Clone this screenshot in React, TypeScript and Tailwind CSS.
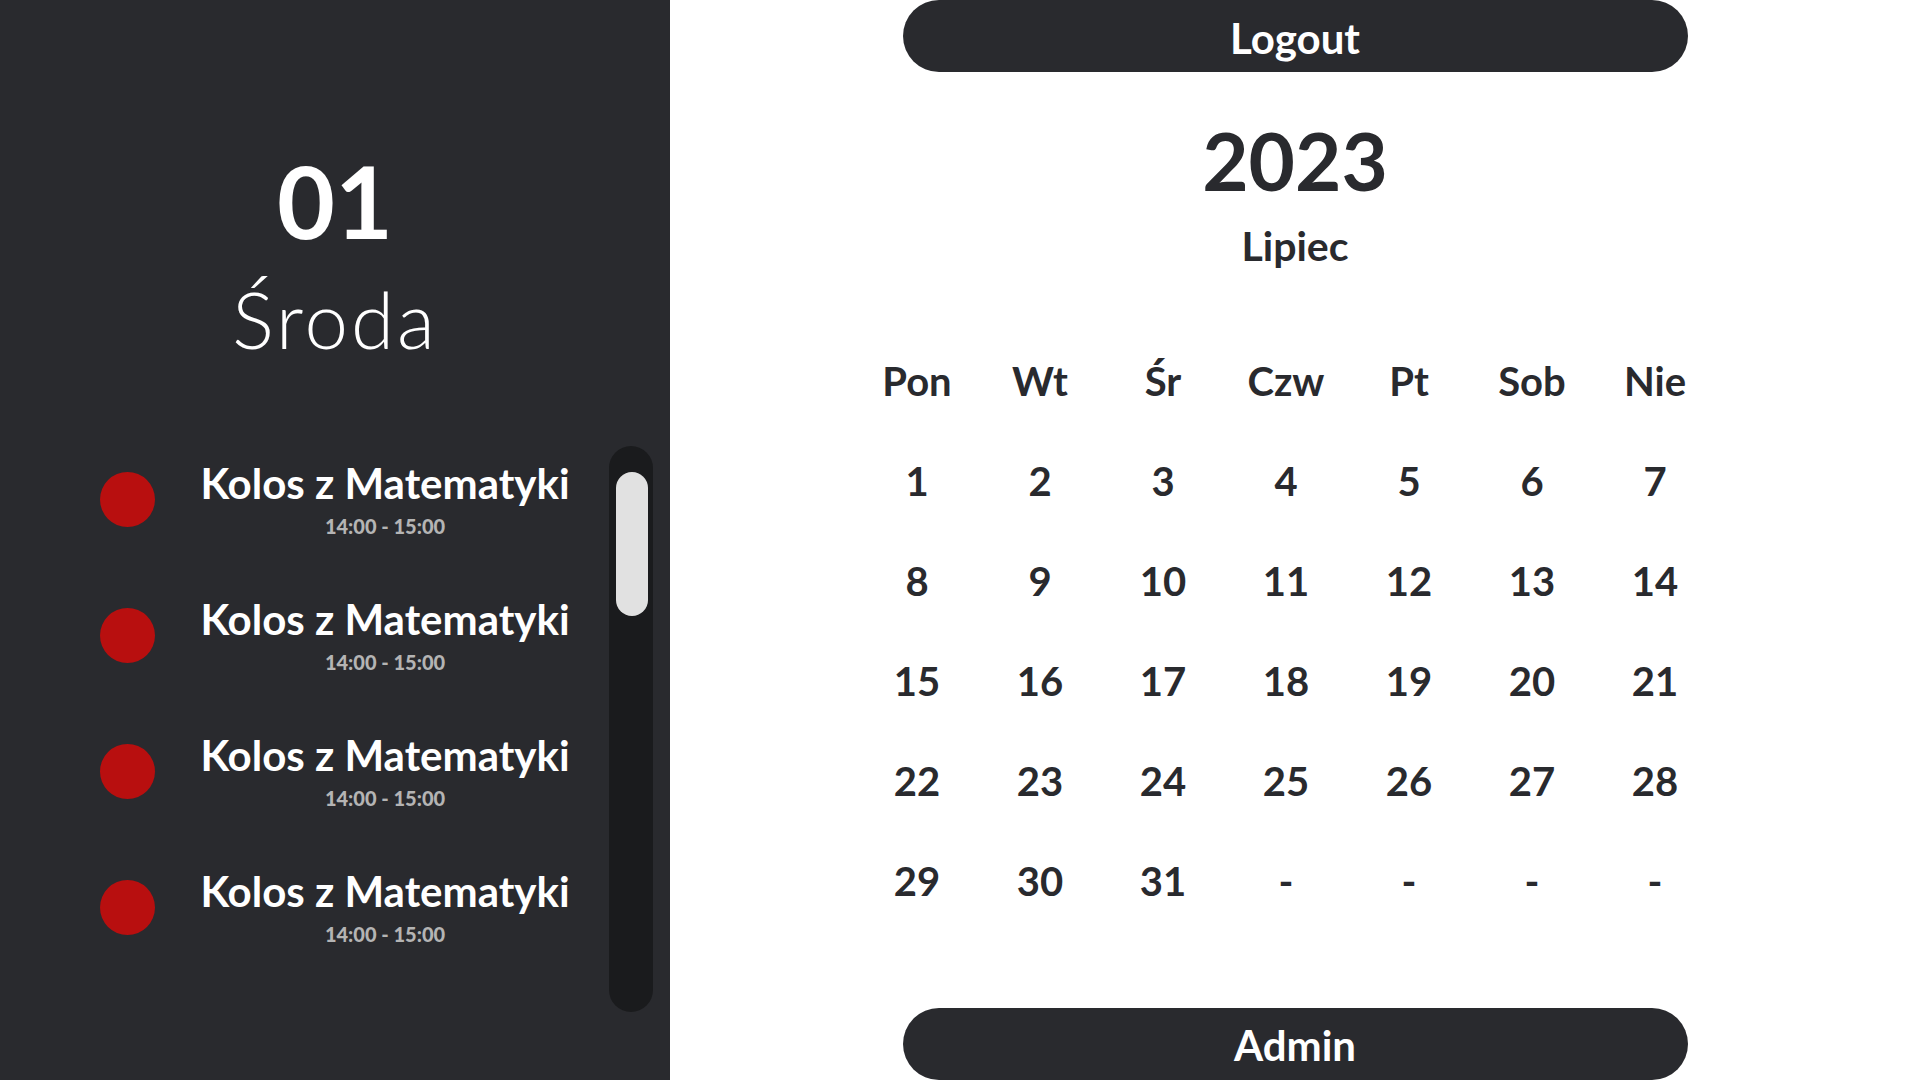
import React from "react"

const DAY_NAMES = ["Pon", "Wt", "Śr", "Czw", "Pt", "Sob", "Nie"]

const DAYS: string[] = [
  ...Array.from({ length: 31 }, (_, i) => String(i + 1)),
  "-",
  "-",
  "-",
  "-",
]

const EVENTS = [
  { id: 1, title: "Kolos z Matematyki", time: "14:00 - 15:00" },
  { id: 2, title: "Kolos z Matematyki", time: "14:00 - 15:00" },
  { id: 3, title: "Kolos z Matematyki", time: "14:00 - 15:00" },
  { id: 4, title: "Kolos z Matematyki", time: "14:00 - 15:00" },
]

export default function App() {
  return (
    <div className="flex h-[1080px] w-[1920px] overflow-hidden bg-white font-['Lato','Noto_Sans',sans-serif]">
      <DayPanel />
      <CalendarPanel />
    </div>
  )
}

function DayPanel() {
  return (
    <aside className="flex h-full w-[670px] shrink-0 flex-col bg-[#292a2e] text-white">
      <div className="flex flex-col items-center pt-[150px]">
        <h1 className="text-[100px] font-bold leading-none">01</h1>
        <h2 className="mt-[30px] text-[78px] font-light leading-none tracking-[3px]">
          Środa
        </h2>
      </div>

      <div className="mt-[88px] flex pl-[100px]">
        <div className="h-[566px] w-[474px] overflow-hidden">
          <ul className="flex flex-col gap-[62px] pt-[16px]">
            {EVENTS.map((event) => (
              <li className="flex items-center gap-[43px]" key={event.id}>
                <span className="h-[55px] w-[55px] shrink-0 rounded-full bg-[#b80f0f]" />
                <div className="flex w-[374px] flex-col items-center">
                  <p className="whitespace-nowrap text-[42px] font-bold leading-none">
                    {event.title}
                  </p>
                  <p className="mt-[12px] text-[20px] font-black leading-none text-[#b4b4b4]">
                    {event.time}
                  </p>
                </div>
              </li>
            ))}
          </ul>
        </div>
        <div className="ml-[35px] h-[566px] w-[44px] rounded-full bg-[#1a1b1d] pl-[7px] pt-[26px]">
          <div className="h-[144px] w-[32px] rounded-full bg-[#e1e1e1]" />
        </div>
      </div>
    </aside>
  )
}

function CalendarPanel() {
  return (
    <main className="flex h-full flex-1 flex-col items-center text-[#292a2e]">
      <button
        className="flex h-[72px] w-[785px] shrink-0 items-center justify-center rounded-full bg-[#292a2e] pt-[4px] text-[42px] font-bold leading-none text-white"
        type="button"
      >
        Logout
      </button>

      <h1 className="mt-[48px] text-[80px] font-bold leading-none">2023</h1>
      <h2 className="mt-[25px] text-[41px] font-bold leading-none">Lipiec</h2>

      <div className="mr-[18px] mt-[65px] grid w-[861px] grid-cols-7">
        {DAY_NAMES.map((name) => (
          <div
            className="flex h-[100px] items-center justify-center text-[40px] font-bold leading-none"
            key={name}
          >
            {name}
          </div>
        ))}
        {DAYS.map((day, i) => (
          <div
            className="flex h-[100px] items-center justify-center text-[40px] font-bold leading-none"
            key={i}
          >
            {day}
          </div>
        ))}
      </div>

      <div className="flex-1" />

      <button
        className="flex h-[72px] w-[785px] shrink-0 items-center justify-center rounded-full bg-[#292a2e] pt-[2px] text-[42px] font-bold leading-none text-white"
        type="button"
      >
        Admin
      </button>
    </main>
  )
}
